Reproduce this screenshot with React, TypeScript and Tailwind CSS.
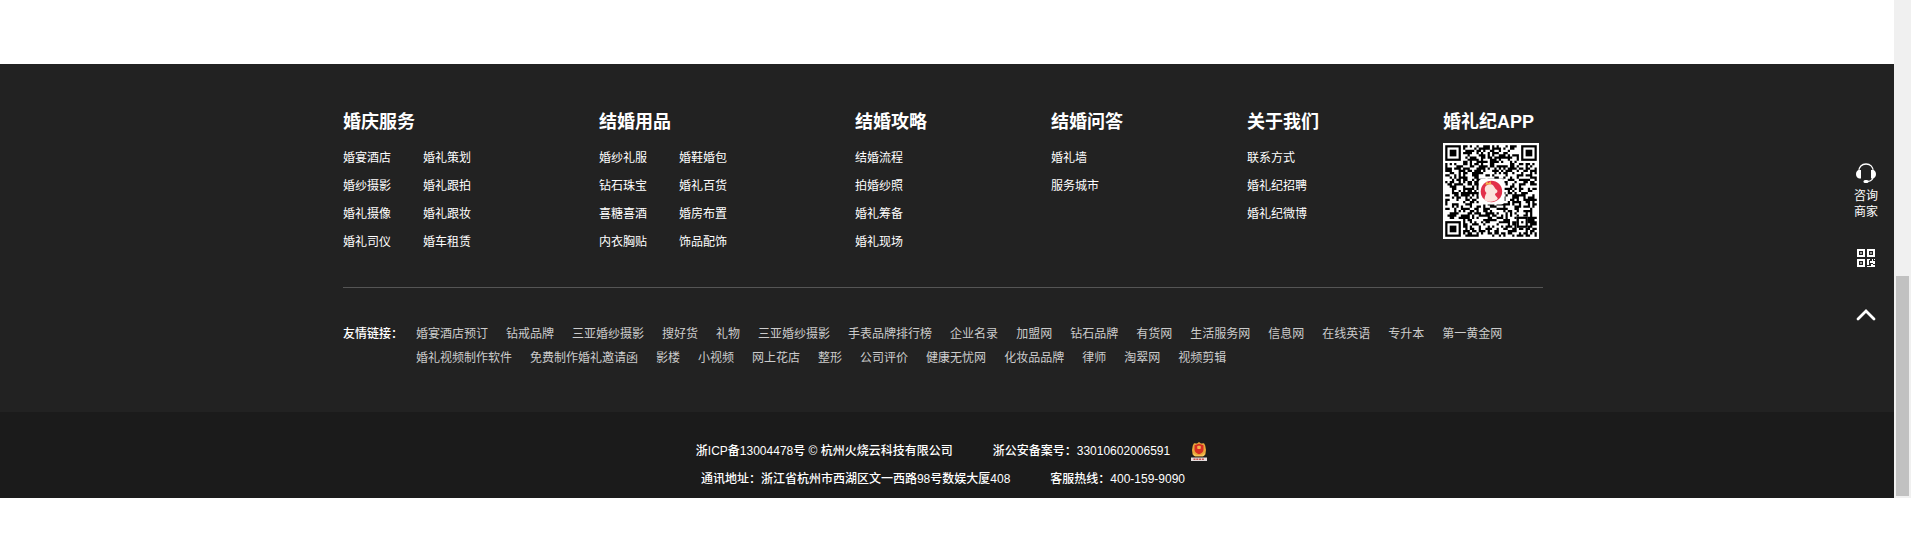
import React from "react";

type Column = { title: string; width: string; groups: string[][] };

const columns: Column[] = [
  {
    title: "婚庆服务",
    width: "w-64",
    groups: [
      ["婚宴酒店", "婚纱摄影", "婚礼摄像", "婚礼司仪"],
      ["婚礼策划", "婚礼跟拍", "婚礼跟妆", "婚车租赁"],
    ],
  },
  {
    title: "结婚用品",
    width: "w-64",
    groups: [
      ["婚纱礼服", "钻石珠宝", "喜糖喜酒", "内衣胸贴"],
      ["婚鞋婚包", "婚礼百货", "婚房布置", "饰品配饰"],
    ],
  },
  { title: "结婚攻略", width: "w-49", groups: [["结婚流程", "拍婚纱照", "婚礼筹备", "婚礼现场"]] },
  { title: "结婚问答", width: "w-49", groups: [["婚礼墙", "服务城市"]] },
  { title: "关于我们", width: "w-49", groups: [["联系方式", "婚礼纪招聘", "婚礼纪微博"]] },
];

const friendLinks = [
  "婚宴酒店预订", "钻戒品牌", "三亚婚纱摄影", "搜好货", "礼物", "三亚婚纱摄影", "手表品牌排行榜",
  "企业名录", "加盟网", "钻石品牌", "有货网", "生活服务网", "信息网", "在线英语", "专升本",
  "第一黄金网", "婚礼视频制作软件", "免费制作婚礼邀请函", "影楼", "小视频", "网上花店", "整形",
  "公司评价", "健康无忧网", "化妆品品牌", "律师", "淘翠网", "视频剪辑",
];

const SIZE = 41;

function qrPath(): string {
  let state = 20477;
  let d = "";
  const corner = (x: number, y: number) =>
    (x < 8 && y < 8) || (x > SIZE - 9 && y < 8) || (x < 8 && y > SIZE - 9);
  for (let y = 0; y < SIZE; y++) {
    for (let x = 0; x < SIZE; x++) {
      state ^= state << 13;
      state ^= state >>> 17;
      state ^= state << 5;
      const dark = (state >>> 0) % 100 < 50;
      if (!corner(x, y) && dark) d += `M${x} ${y}h1v1h-1z`;
    }
  }
  return d;
}

const modules = qrPath();

function AppCode() {
  return (
    <svg className="size-24 bg-white" viewBox="-1 -1 43 43" role="img" aria-label="婚礼纪APP">
      <path d={modules} fill="#000" />
      {[[0, 0], [34, 0], [0, 34]].map(([x, y]) => (
        <g key={`${x}-${y}`}>
          <rect x={x + 0.5} y={y + 0.5} width="6" height="6" fill="#fff" stroke="#000" />
          <rect x={x + 2} y={y + 2} width="3" height="3" fill="#000" />
        </g>
      ))}
      <rect x="32" y="32" width="5" height="5" fill="#fff" />
      <rect x="32.5" y="32.5" width="4" height="4" fill="none" stroke="#000" />
      <rect x="34" y="34" width="1" height="1" fill="#000" />
      <rect x="15" y="15" width="11.6" height="11.6" rx="1.8" fill="#fff" />
      <circle cx="20.7" cy="20.7" r="4.8" fill="#e2304a" />
      <path d="M17.6 24.4c.1-1.400.4-2.200.9-3-.9-.7-1.100-2.300-.2-3.200.9-1 2.500-1 3.300-.1.600.7.7 1.400 1.400 1.800.6.400.5 1.300-.2 1.500-.5.200-.7.500-.3 1.100.5.700 1.100 1 1 1.600-1.600 1.500-4.300 1.600-5.900.3z" fill="#fbe3dc" />
      <path d="M18 17.700l.5-1.400.9.7.9-1 .3 1.500z" fill="#f2b64a" />
    </svg>
  );
}

function HeadsetIcon() {
  return (
    <svg className="h-5 w-5" viewBox="0 0 20 20" fill="none" aria-hidden="true">
      <path d="M2.800 8.500C2.800 3.800 5.800 1 10 1s7.200 2.800 7.200 7.500M17 14.500c-.4 2.300-2 3.600-5 3.900" stroke="#fff" strokeWidth="1.300" />
      <path d="M5 7H3.200C1.300 7 0 8.700 0 11s1.300 4.500 3.200 4.500H5zM15 7h1.800c1.900 0 3.200 1.700 3.200 4s-1.300 4.500-3.200 4.500H15z" fill="#fff" />
      <rect x="7.500" y="17" width="5" height="3" rx="1.500" fill="#fff" />
    </svg>
  );
}

function CodeIcon() {
  return (
    <svg className="size-[18px]" viewBox="0 0 18 18" fill="none" aria-hidden="true">
      <path d="M1 1h6v6H1zM11 1h6v6h-6zM1 11h6v6H1z" stroke="#fff" strokeWidth="2" />
      <path d="M3 3h2v2H3zM13 3h2v2h-2zM3 13h2v2H3z" fill="#999" />
      <path d="M10 10h3v1h-1v5h-2zM13 12h2v-2h1v2h2v3h-2v-1h-3zM10 17h4v-2h2v1h2v2h-8zM17 10h1v1h-1z" fill="#fff" />
    </svg>
  );
}

function PoliceBadge() {
  return (
    <svg className="h-[19px] w-4" viewBox="0 0 16 19" aria-hidden="true">
      <path d="M8 0l2 1.500 3-.3 1.200 2.300L15 8l-.6 4.500L12 14.500H4L1.600 12.500 1 8l.8-4.500L3 1.200l3 .3z" fill="#e9a63a" />
      <path d="M8 1.800l4.500 1.500v4.500c0 2-2 3.500-4.500 4.500-2.500-1-4.500-2.500-4.500-4.500V3.300z" fill="#d62e24" />
      <path d="M6 4.500l2-1 2 1-.5 2.500h-3z" fill="#f3b04a" />
      <path d="M2 11l3.500 2h5L14 11l-1 3H3z" fill="#f5c458" />
      <rect x="0" y="15.500" width="16" height="3.500" fill="#e4dcdc" />
      <path d="M2.500 17.200h11" stroke="#c8504c" strokeWidth="1.400" strokeDasharray="2 .8" />
    </svg>
  );
}

export default function App() {
  return (
    <div className="flex items-start bg-white font-['Liberation_Sans','Noto_Sans_CJK_SC',sans-serif] text-xs text-white">
      <div className="relative min-w-0 flex-1 pt-16">
        <footer>
          <div className="bg-[#222] pr-2">
            <div className="mx-auto max-w-[1200px] pt-11 pb-[42px]">
              <div className="flex border-b border-[#555] pb-[31px]">
                {columns.map((column) => (
                  <section key={column.title} className={`${column.width} shrink-0`}>
                    <h2 className="text-lg leading-7 font-bold">{column.title}</h2>
                    <div className="mt-2 flex">
                      {column.groups.map((group) => (
                        <ul key={group[0]} className="w-20">
                          {group.map((item) => (
                            <li key={item} className="leading-7">
                              <a href="#">{item}</a>
                            </li>
                          ))}
                        </ul>
                      ))}
                    </div>
                  </section>
                ))}
                <section className="shrink-0">
                  <h2 className="mb-[7px] text-lg leading-7 font-bold">婚礼纪APP</h2>
                  <AppCode />
                </section>
              </div>
              <div className="flex pt-[34px] leading-6">
                <h3 className="w-[73px] shrink-0 font-medium">友情链接：</h3>
                <ul className="flex flex-wrap gap-x-[18px] text-[#ccc]">
                  {friendLinks.map((link, index) => (
                    <li key={index}>
                      <a href="#">{link}</a>
                    </li>
                  ))}
                </ul>
              </div>
            </div>
          </div>
          <div className="bg-[#1b1b1b] pt-[25px] pr-2 pb-[5px] leading-7 font-medium">
            <p className="flex justify-center gap-10">
              <span>浙ICP备13004478号 © 杭州火烧云科技有限公司</span>
              <a href="#" className="relative flex items-center pr-5">
                浙公安备案号：33010602006591
                <span className="absolute left-full pl-px">
                  <PoliceBadge />
                </span>
              </a>
            </p>
            <p className="flex justify-center gap-10">
              <span>通讯地址：浙江省杭州市西湖区文一西路98号数娱大厦408</span>
              <span>客服热线：400-159-9090</span>
            </p>
          </div>
        </footer>
        <aside className="absolute top-[163px] right-3 flex w-8 flex-col items-center">
          <button type="button" className="flex flex-col items-center leading-4">
            <HeadsetIcon />
            <span className="mt-[5px] w-6">咨询商家</span>
          </button>
          <button type="button" aria-label="二维码" className="mt-[29px]">
            <CodeIcon />
          </button>
          <button type="button" aria-label="返回顶部" className="mt-[42px]">
            <svg className="h-3 w-5" viewBox="0 0 20 12" fill="none" aria-hidden="true">
              <path d="M2 10l8-8 8 8" stroke="#fff" strokeWidth="2.800" strokeLinecap="round" />
            </svg>
          </button>
        </aside>
      </div>
      <div className="flex w-[17px] shrink-0 flex-col justify-end self-stretch bg-[#f0f0f0] px-0.5 pb-0.5" aria-hidden="true">
        <div className="h-[220px] bg-[#c1c1c1]" />
      </div>
    </div>
  );
}
